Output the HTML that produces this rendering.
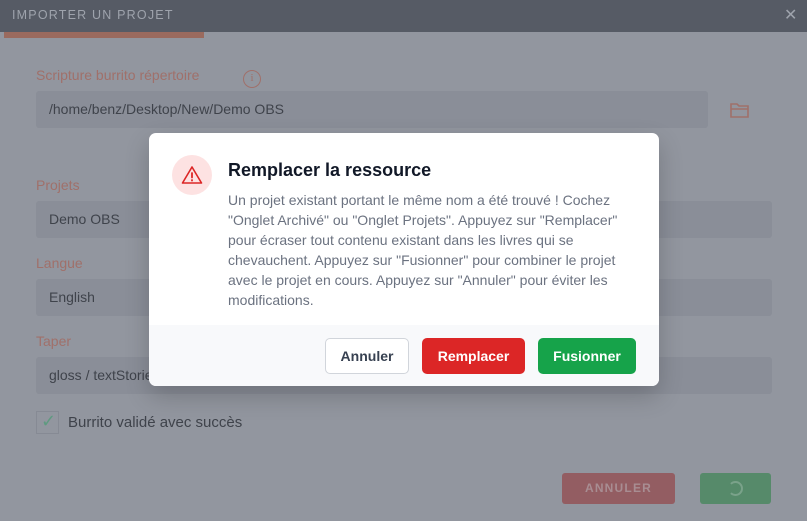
<!DOCTYPE html><html><head><style>
*{margin:0;padding:0;box-sizing:border-box}
body{width:807px;height:521px;overflow:hidden;background:#92969f;font-family:"Liberation Sans","DejaVu Sans",sans-serif;position:relative}
.a{position:absolute}
.lbl{color:#a0706a;font-size:14px}
.fld{background:#8a8e98;border-radius:3px;color:#3f434b;font-size:14px;padding-left:13px;line-height:37px}
</style></head><body>
<div class="a" style="left:0;top:0;width:807px;height:32px;background:#565b65"></div>
<div class="a" style="left:12px;top:8px;color:#9ea3ac;font-size:12.5px;letter-spacing:1.2px">IMPORTER UN PROJET</div>
<div class="a" style="left:784px;top:5px;color:#9ea3ac;font-size:16px">✕</div>
<div class="a" style="left:4px;top:32px;width:200px;height:6px;background:#9a6a5e"></div>
<div class="a lbl" style="left:36px;top:67px">Scripture burrito répertoire</div>
<div class="a" style="left:243px;top:70px;width:18px;height:18px;border:1.5px solid #a0706a;border-radius:50%;color:#a0706a;font-size:11px;text-align:center;line-height:15px;font-family:'Liberation Serif',serif">i</div>
<div class="a fld" style="left:36px;top:91px;width:672px;height:37px">/home/benz/Desktop/New/Demo OBS</div>
<svg class="a" style="left:729px;top:100px" width="22" height="20" viewBox="0 0 22 20"><path d="M2 4h6l2 2h9v11H2z M2 9h17" fill="none" stroke="#a0706a" stroke-width="1.6"/></svg>
<div class="a lbl" style="left:36px;top:177px">Projets</div>
<div class="a fld" style="left:36px;top:201px;width:736px;height:37px">Demo OBS</div>
<div class="a lbl" style="left:36px;top:255px">Langue</div>
<div class="a fld" style="left:36px;top:279px;width:736px;height:37px">English</div>
<div class="a lbl" style="left:36px;top:333px">Taper</div>
<div class="a fld" style="left:36px;top:357px;width:736px;height:37px">gloss / textStories</div>
<div class="a" style="left:36px;top:411px;width:23px;height:23px;border:1px solid #868a94"></div>
<div class="a" style="left:41px;top:411px;color:#5f9a80;font-size:18px">✓</div>
<div class="a" style="left:68px;top:414px;color:#3f434b;font-size:15px">Burrito validé avec succès</div>
<div class="a" style="left:562px;top:473px;width:113px;height:31px;background:#935d62;border-radius:3px;color:#a88d92;font-size:12px;font-weight:bold;letter-spacing:1.2px;text-align:center;line-height:31px">ANNULER</div>
<div class="a" style="left:700px;top:473px;width:71px;height:31px;background:#568a6a;border-radius:3px"></div>
<div class="a" style="left:728px;top:481px;width:15px;height:15px;border:2px solid #7aa28a;border-left-color:#568a6a;border-radius:50%"></div>

<div class="a" style="left:149px;top:133px;width:510px;height:253px;background:#fff;border-radius:7px;overflow:hidden;box-shadow:0 10px 25px rgba(0,0,0,.2)">
 <div class="a" style="left:23px;top:22px;width:40px;height:40px;border-radius:50%;background:#fde2e2"></div>
 <svg class="a" style="left:31px;top:30px" width="24" height="24" viewBox="0 0 24 24"><path d="M12 4L2.5 20h19z" fill="none" stroke="#dc2626" stroke-width="1.6" stroke-linejoin="round"/><path d="M12 10v4.5M12 17v.6" stroke="#dc2626" stroke-width="1.8" stroke-linecap="round"/></svg>
 <div class="a" style="left:79px;top:27px;font-size:18px;font-weight:bold;color:#111827">Remplacer la ressource</div>
 <div class="a" style="left:79px;top:57px;width:420px;font-size:14px;line-height:20px;color:#6b7280">Un projet existant portant le même nom a été trouvé ! Cochez "Onglet Archivé" ou "Onglet Projets". Appuyez sur "Remplacer" pour écraser tout contenu existant dans les livres qui se chevauchent. Appuyez sur "Fusionner" pour combiner le projet avec le projet en cours. Appuyez sur "Annuler" pour éviter les modifications.</div>
 <div class="a" style="left:0;top:192px;width:510px;height:61px;background:#f8f9fb"></div>
 <div class="a" style="left:176px;top:205px;width:84px;height:36px;background:#fff;border:1px solid #d1d5db;border-radius:5px;font-size:14px;font-weight:bold;color:#374151;text-align:center;line-height:34px">Annuler</div>
 <div class="a" style="left:273px;top:205px;width:103px;height:36px;background:#dc2626;border-radius:5px;font-size:14px;font-weight:bold;color:#fff;text-align:center;line-height:36px">Remplacer</div>
 <div class="a" style="left:389px;top:205px;width:98px;height:36px;background:#16a34a;border-radius:5px;font-size:14px;font-weight:bold;color:#fff;text-align:center;line-height:36px">Fusionner</div>
</div>
</body></html>
